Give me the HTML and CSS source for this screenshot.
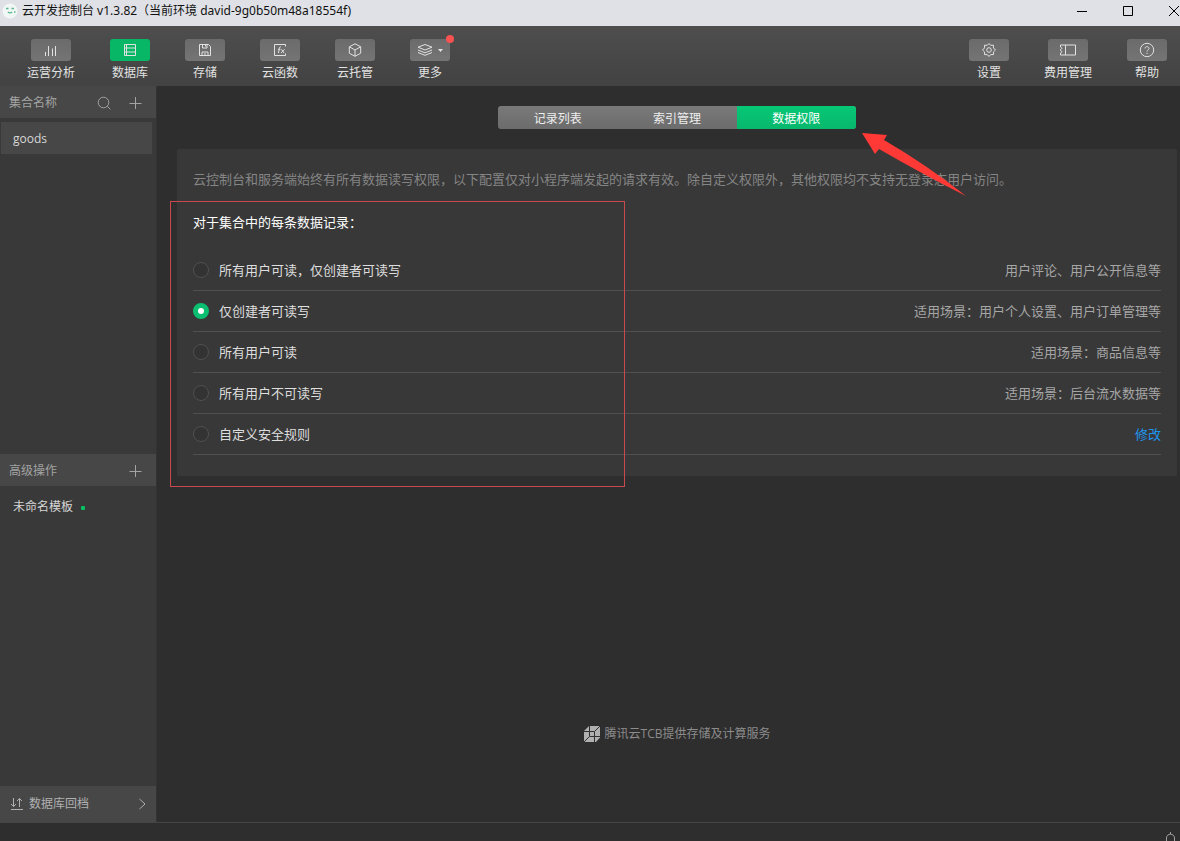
FILE: index.html
```html
<!DOCTYPE html>
<html lang="zh-CN">
<head>
<meta charset="utf-8">
<title>云开发控制台</title>
<link rel="stylesheet" href="styles.css">
</head>
<body>
<div class="app">
  <header class="titlebar">
    <svg class="app-icon" width="16" height="16" viewBox="0 0 16 16"><circle cx="8" cy="8" r="7.500" fill="#f1f7f4" stroke="none"/><path d="M4 5.500h2.500M9.500 5.500H12M6 9c1 1.200 3 1.200 4 0M12 9h1.500" fill="none" stroke="#5cb893" stroke-width="1.400"/></svg>
    <h1 class="window-title">云开发控制台 v1.3.82（当前环境 david-9g0b50m48a18554f)</h1>
    <div class="window-controls">
      <button type="button" aria-label="最小化"><svg width="12" height="12" viewBox="0 0 12 12"><path d="M1 6.500h10"/></svg></button>
      <button type="button" aria-label="最大化"><svg width="12" height="12" viewBox="0 0 12 12"><path d="M1.500 1.500h9v9h-9z"/></svg></button>
      <button type="button" aria-label="关闭"><svg width="12" height="12" viewBox="0 0 12 12"><path d="M1 1l10 10M11 1L1 11"/></svg></button>
    </div>
  </header>

  <nav class="toolbar">
    <div class="tool-group">
      <button type="button" class="tool"><span class="tool-icon"><svg width="16" height="16" viewBox="0 0 16 16"><path d="M2.500 10v4M5.500 4v10M9.500 6.500v7.500M12.500 4v10"/></svg></span>运营分析</button>
      <button type="button" class="tool tool-active"><span class="tool-icon"><svg width="16" height="16" viewBox="0 0 16 16"><path d="M2.500 2.500h11v11h-11zM2.500 6h11M2.500 10h11M4.500 2.500v11"/></svg></span>数据库</button>
      <button type="button" class="tool"><span class="tool-icon"><svg width="16" height="16" viewBox="0 0 16 16"><path d="M2.500 2.500h9l2 2v9h-11zM5.500 2.500v3.500h4.500v-3.500M8.500 3v1.500M5 13.500v-3.500h6v3.500M7 12h2"/></svg></span>存储</button>
      <button type="button" class="tool"><span class="tool-icon"><svg width="16" height="16" viewBox="0 0 16 16"><path d="M13.500 4.500v-2h-11v11h11v-2M9 5c-1-.4-1.600.2-1.700 1.200L6.500 11M6 7.300h2.500M9.500 7.300l2.500 3.700M12.500 7.300L9 11"/></svg></span>云函数</button>
      <button type="button" class="tool"><span class="tool-icon"><svg width="16" height="16" viewBox="0 0 16 16"><path d="M8 1.800l5.700 3v6.400L8 14.300l-5.700-3.100V4.800zM2.300 4.800L8 8l5.700-3.200M8 8v6.300"/></svg></span>云托管</button>
      <button type="button" class="tool"><span class="tool-icon"><svg width="28" height="16" viewBox="0 0 28 16"><path d="M9 2.500l7 2.700L9 8 2 5.200zM2 8l7 2.800L16 8M2 10.500l7 2.800 7-2.800"/><path class="solid" d="M22 7h5l-2.500 3z"/></svg><i class="badge"></i></span>更多</button>
    </div>
    <div class="tool-group">
      <button type="button" class="tool"><span class="tool-icon"><svg width="16" height="16" viewBox="0 0 16 16"><path d="M8 1.500l1.700 1.800 2.800-.1-.1 2.700L14.500 8l-2.100 2 .1 2.600-2.800 0L8 14.500l-1.700-1.900-2.800 0 .1-2.600L1.500 8l2.100-2.100-.1-2.700 2.800.1z"/><circle cx="8" cy="8" r="2.300"/></svg></span>设置</button>
      <button type="button" class="tool"><span class="tool-icon"><svg width="18" height="16" viewBox="0 0 18 16"><path d="M1.500 3h15v10h-15v-2c1.800-.4 1.800-2 0-2.500v-1c1.800-.4 1.800-2 0-2.500zM6.500 3v10"/></svg></span>费用管理</button>
      <button type="button" class="tool"><span class="tool-icon"><svg width="16" height="16" viewBox="0 0 16 16"><circle cx="8" cy="8" r="6.700"/><path d="M6 6.500c0-2.500 4-2.500 4 0 0 1.500-2 1.500-2 3M8 10.800v1.200"/></svg></span>帮助</button>
    </div>
  </nav>

  <div class="body">
    <aside class="sidebar">
      <section class="side-section">
        <div class="side-head">
          <h2>集合名称</h2>
          <button type="button" class="icon-button" aria-label="搜索"><svg width="14" height="14" viewBox="0 0 14 14"><circle cx="6.500" cy="6.500" r="5.300"/><path d="M10.300 10.300l3 3"/></svg></button>
          <button type="button" class="icon-button" aria-label="新建集合"><svg width="14" height="14" viewBox="0 0 14 14"><path d="M6.500 1v12M.5 7.500h12"/></svg></button>
        </div>
        <ul class="side-list">
          <li><a href="#goods" class="side-item side-selected">goods</a></li>
        </ul>
      </section>
      <section class="side-section">
        <div class="side-head">
          <h2>高级操作</h2>
          <button type="button" class="icon-button" aria-label="新建模板"><svg width="14" height="14" viewBox="0 0 14 14"><path d="M6.500 1v12M.5 7.500h12"/></svg></button>
        </div>
        <ul class="side-list">
          <li><a href="#template" class="side-item">未命名模板<i class="dot"></i></a></li>
        </ul>
        <button type="button" class="restore">
          <svg width="14" height="14" viewBox="0 0 14 14"><path d="M3.500 1v8.500M1 7l2.500 2.500L6 7M9.500 10V1.500M7 4l2.500-2.500L12 4M1 12.500h12"/></svg>
          <span>数据库回档</span>
          <svg width="8" height="12" viewBox="0 0 8 12"><path d="M1.500 1L7 6l-5.500 5"/></svg>
        </button>
      </section>
    </aside>

    <main class="content">
      <div class="tabs">
        <button type="button">记录列表</button>
        <button type="button">索引管理</button>
        <button type="button" class="tab-active">数据权限</button>
      </div>
      <section class="panel">
        <p class="hint">云控制台和服务端始终有所有数据读写权限，以下配置仅对小程序端发起的请求有效。除自定义权限外，其他权限均不支持无登录态用户访问。</p>
        <h2 class="panel-title">对于集合中的每条数据记录：</h2>
        <ul class="rules">
          <li><label><input type="radio" name="rule">所有用户可读，仅创建者可读写</label><span>用户评论、用户公开信息等</span></li>
          <li><label><input type="radio" name="rule" checked>仅创建者可读写</label><span>适用场景：用户个人设置、用户订单管理等</span></li>
          <li><label><input type="radio" name="rule">所有用户可读</label><span>适用场景：商品信息等</span></li>
          <li><label><input type="radio" name="rule">所有用户不可读写</label><span>适用场景：后台流水数据等</span></li>
          <li><label><input type="radio" name="rule">自定义安全规则</label><a href="#edit">修改</a></li>
        </ul>
      </section>
      <p class="provider">
        <svg width="16" height="16" viewBox="0 0 16 16"><path d="M5 0h11v11.500L12 16H0V5z" fill="#b0b0b0"/><path d="M5.500 5.500h5v5h-5zM0 5.500h5.500V0M10.500 5.500L16 0M5.500 10.500L0 16M10.500 16v-5.500H16" fill="none" stroke="#303030"/></svg>
        腾讯云TCB提供存储及计算服务
      </p>
      <div class="mark-frame"></div>
      <svg class="mark-arrow" width="106" height="66" viewBox="0 0 106 66"><path d="M0 1L25 3l-3 5q43 25 82 56Q62 43 17 17l-4 5z"/></svg>
    </main>
  </div>

  <footer class="statusbar">
    <button type="button" class="icon-button" aria-label="通知"><svg width="12" height="14" viewBox="0 0 12 14"><path d="M1.500 11V6c0-5 8-5 8 0v5M0 11.500h12M5.500 0v2M4 13h3"/></svg></button>
  </footer>
</div>
</body>
</html>
```
FILE: styles.css
```css
* { box-sizing: border-box; }

body {
  margin: 0;
  background: #2e2e2e;
  color: #dedede;
  font: 13px/20px "Open Sans", "Noto Sans CJK SC", sans-serif;
}

h1, h2, p, ul { margin: 0; padding: 0; font-size: inherit; font-weight: 400; }
ul { list-style: none; }
a { text-decoration: none; }
button { margin: 0; padding: 0; border: 0; background: none; color: inherit; font: inherit; }
svg { display: block; flex: none; fill: none; stroke: currentColor; }

.app { display: flex; flex-direction: column; min-height: 100vh; overflow: hidden; }

.titlebar {
  display: flex;
  align-items: center;
  height: 26px;
  padding: 0 0 5px 2px;
  background: #dfe1e6;
  color: #111;
  font-size: 12px;
}
.window-title { flex: 1; margin-left: 4px; font-family: "Noto Sans", "Noto Sans CJK SC", sans-serif; }
.window-controls { display: flex; gap: 34px; color: #000; }

.toolbar {
  display: flex;
  justify-content: space-between;
  height: 60px;
  padding: 13px 13px 0 27px;
  background: linear-gradient(#4e4e4e, #424242);
}
.tool-group { display: flex; align-items: flex-start; gap: 35px; }
.tool {
  display: flex;
  flex-direction: column;
  align-items: center;
  min-width: 40px;
  color: #e2e2e2;
  font-size: 12px;
  white-space: nowrap;
}
.tool-icon {
  position: relative;
  display: flex;
  align-items: center;
  justify-content: center;
  width: 40px;
  height: 22px;
  margin-bottom: 2px;
  border-radius: 3px;
  background: linear-gradient(#6b6b6b, #747474);
}
.tool-active .tool-icon { background: #07b765; }
.solid { fill: currentColor; stroke: none; }
.badge {
  position: absolute;
  top: -4px;
  right: -4px;
  width: 8px;
  height: 8px;
  border-radius: 50%;
  background: #fa5151;
}

.body { display: flex; flex: 1; }

.sidebar {
  display: grid;
  grid-template-rows: 1fr 1fr;
  flex: none;
  width: 157px;
  border-right: 1px solid #333;
  background: #393939;
  font-size: 12px;
}
.side-section { display: flex; flex-direction: column; }
.side-head {
  display: flex;
  align-items: center;
  gap: 18px;
  height: 32px;
  padding: 1px 13px 0 9px;
  background: #474747;
  color: #a3a3a3;
}
.side-head h2 { flex: 1; }
.side-list { flex: 1; padding: 4px 4px 4px 1px; }
.side-item {
  display: flex;
  align-items: center;
  height: 32px;
  padding: 2px 0 0 12px;
  color: #d6d6d6;
}
.side-selected { background: #474747; }
.dot { width: 4px; height: 4px; margin: 2px 0 0 8px; border-radius: 1px; background: #07c160; }
.restore {
  display: flex;
  align-items: center;
  gap: 5px;
  height: 36px;
  padding: 0 10px;
  background: #474747;
  color: #b0b0b0;
  text-align: left;
}
.restore span { flex: 1; }

.content {
  position: relative;
  display: flex;
  flex: 1;
  flex-direction: column;
  padding: 20px 3px 78px 20px;
}
.tabs {
  display: grid;
  grid-template-columns: repeat(3, 1fr);
  align-self: center;
  width: 358px;
  height: 23px;
  margin-bottom: 20px;
  overflow: hidden;
  border-radius: 3px;
  background: linear-gradient(#797979, #6c6c6c);
  color: #eee;
  font-size: 12px;
}
.tabs button { padding-top: 2px; }
.tab-active { background: linear-gradient(#07c777, #07b86c); color: #fff; }

.panel { padding: 20px 16px 21px; border-radius: 2px; background: #383838; }
.hint { color: #858585; }
.panel-title { margin: 23px 0 18px; color: #fff; }
.rules li {
  display: flex;
  align-items: center;
  justify-content: space-between;
  height: 41px;
  border-bottom: 1px solid #505050;
}
.rules label { display: flex; align-items: center; gap: 10px; }
.rules span { color: #a6a6a6; }
.rules a { color: #1e96f0; }
.rules input {
  width: 16px;
  height: 16px;
  margin: 0;
  border: 1px solid #505050;
  border-radius: 50%;
  background: #333;
  appearance: none;
}
.rules input:checked { border: 5px solid #0bbf70; background: #fff; }

.provider {
  display: flex;
  align-items: center;
  justify-content: center;
  gap: 5px;
  margin-top: auto;
  color: #8c8c8c;
  font-size: 12px;
}

.mark-frame {
  position: absolute;
  top: 115px;
  left: 13px;
  width: 455px;
  height: 286px;
  border: 1px solid #c94a4e;
  pointer-events: none;
}
.provider svg path:first-child { stroke: none; }
.mark-arrow { position: absolute; top: 46px; left: 705px; fill: #ff3a36; stroke: none; }

.statusbar {
  display: flex;
  justify-content: flex-end;
  height: 19px;
  padding: 9px 3px 0 0;
  overflow: hidden;
  border-top: 1px solid #454545;
  color: #a0a0a0;
}
```
